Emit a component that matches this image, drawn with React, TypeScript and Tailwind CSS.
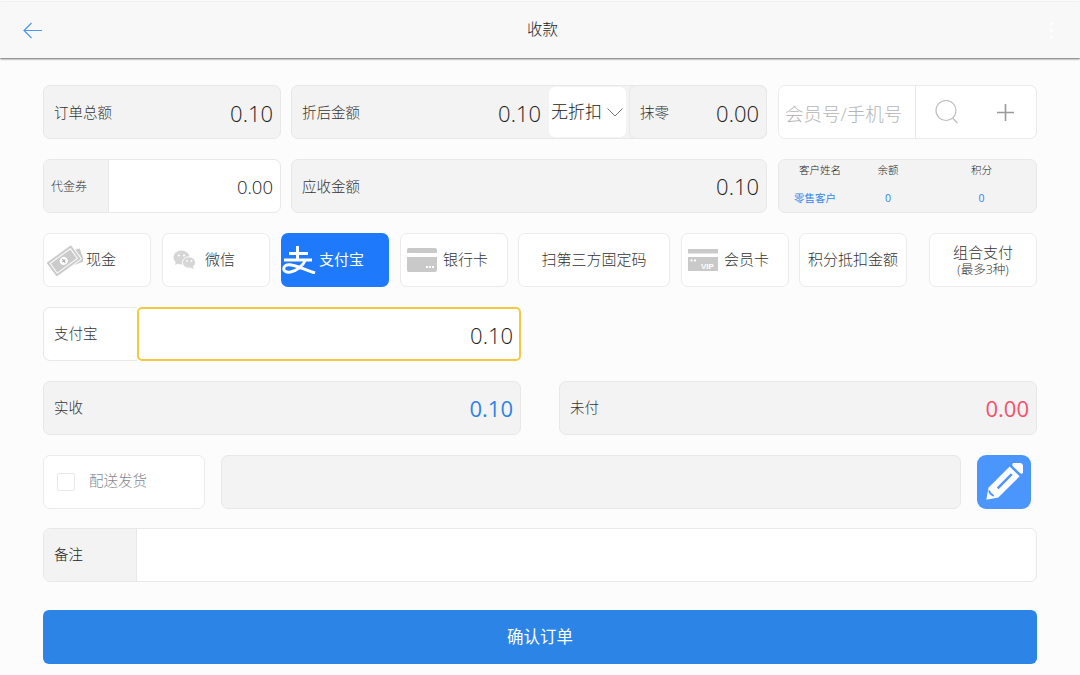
import React from "react";

const font = { fontFamily: '"Open Sans","Noto Sans CJK SC",sans-serif' };

function Stat({ label, value, className = "", valueClass = "text-[#1c1c1c] font-light pt-[3px]", labelClass = "pt-[2px]" }: { label: string; value: string; className?: string; valueClass?: string; labelClass?: string }) {
  return (
    <div className={`h-[54px] flex items-center justify-between pl-[10px] pr-[7px] bg-[#f3f3f3] border border-[#e8e8e8] rounded-[7px] ${className}`}>
      <span className={`text-[14.5px] text-[#333] ${labelClass}`}>{label}</span>
      <span className={`text-[22px] ${valueClass}`}>{value}</span>
    </div>
  );
}

function Money() {
  return (
    <svg width="36" height="32" viewBox="0 0 36 32" className="shrink-0">
      <g transform="rotate(-36 18 16)">
        <rect x="7" y="10" width="29" height="15" rx="1" fill="#c9c9c9" stroke="#fff" strokeWidth="1" transform="rotate(16 20 17)" />
        <rect x="1" y="7" width="31" height="18" rx="1.500" fill="#cbcbcb" stroke="#fff" strokeWidth="1" />
        <rect x="4" y="10" width="25" height="12" fill="none" stroke="#fff" strokeWidth="1" />
        <circle cx="16.500" cy="16" r="4" fill="#fff" />
        <path d="M16.500 13.500v5M14.500 16h4" stroke="#a8a8a8" strokeWidth="1" />
      </g>
    </svg>
  );
}

function Wechat() {
  return (
    <svg width="23" height="20" viewBox="0 0 23 20" className="shrink-0">
      <ellipse cx="8.500" cy="7.500" rx="8" ry="7" fill="#d6d6d6" />
      <path d="M3 11l-1 4 4-2z" fill="#d6d6d6" />
      <ellipse cx="16" cy="12.500" rx="6.500" ry="5.700" fill="#d6d6d6" stroke="#fff" strokeWidth="1" />
      <path d="M19.500 16l1.500 3-4-1.500z" fill="#d6d6d6" />
      <circle cx="6" cy="5.500" r="1.100" fill="#fff" />
      <circle cx="11" cy="5.500" r="1.100" fill="#fff" />
      <circle cx="14" cy="11" r="0.900" fill="#fff" />
      <circle cx="18.500" cy="11" r="0.900" fill="#fff" />
    </svg>
  );
}

function Alipay() {
  return (
    <svg width="34" height="28" viewBox="0 0 34 28" fill="none" stroke="#fff" strokeWidth="3" className="shrink-0">
      <path d="M7 7.500h19" />
      <path d="M15.500 0v13" />
      <path d="M2 14h28" />
      <path d="M23.500 14c-2.500 5.500-8.500 11-15 12c-4.500 .6-6.800-1-6.800-3.300c0-3 3-4.400 6.300-4c7 .8 14 4.800 25 8.300" />
    </svg>
  );
}

function BankCard() {
  return (
    <svg width="30" height="25" viewBox="0 0 30 25" className="shrink-0">
      <path d="M0 3a2 2 0 012-2h26a2 2 0 012 2v3H0z" fill="#c9c9c9" />
      <path d="M0 10h30v13a2 2 0 01-2 2H2a2 2 0 01-2-2z" fill="#c9c9c9" />
      <rect x="19" y="19" width="2" height="2" fill="#fff" />
      <rect x="22" y="19" width="2" height="2" fill="#fff" />
      <rect x="25" y="19" width="2" height="2" fill="#fff" />
    </svg>
  );
}

function VipCard() {
  return (
    <svg width="30" height="22" viewBox="0 0 30 22" className="shrink-0">
      <rect x="0" y="0" width="30" height="4.500" fill="#c9c9c9" />
      <rect x="0" y="8" width="30" height="14" fill="#c9c9c9" />
      <rect x="2.500" y="10.500" width="2" height="2" fill="#fff" />
      <rect x="6" y="10.500" width="2" height="2" fill="#fff" />
      <text x="13" y="20.200" fontSize="8" fontWeight="700" fill="#fff" fontFamily="Liberation Sans, sans-serif">VIP</text>
    </svg>
  );
}

function Pencil() {
  return (
    <svg width="38" height="38" viewBox="0 0 38 38">
      <g transform="rotate(45 19 19)">
        <rect x="12" y="-6.500" width="14" height="8" rx="2.500" fill="#fff" />
        <path d="M12 4h14v30l-7 10-7-10z" fill="#fff" />
        <rect x="17.800" y="8" width="2.400" height="20" fill="#4a96fc" />
        <path d="M14.500 35.500c2 1.500 5 1.500 7 .5" fill="none" stroke="#4a96fc" strokeWidth="1.800" />
      </g>
    </svg>
  );
}

function PayButton({ className = "", children }: { className?: string; children: React.ReactNode }) {
  return (
    <div className={`h-[54px] flex items-center rounded-[7px] border border-[#ebebeb] bg-white text-[15px] text-[#333] ${className}`}>
      {children}
    </div>
  );
}

export default function App() {
  return (
    <div style={font} className="w-[1080px] h-[675px] overflow-hidden bg-[#fcfcfc] font-light">
      <header className="mt-[2px] h-[56px] flex items-center justify-between pl-[23px] pr-[27px] bg-[#f8f8f8] shadow-[0_1px_2px_rgba(0,0,0,0.6)]">
        <svg width="19" height="17" viewBox="0 0 19 17" fill="none" stroke="#4a96f5" strokeWidth="1.200">
          <path d="M19 8.500H1M8.500 1L1 8.500 8.500 16" />
        </svg>
        <span className="text-[15.5px] text-[#222] -ml-[7px] -mt-[1px]">收款</span>
        <div className="flex flex-col gap-[4px]">
          <i className="block w-[3px] h-[3px] rounded-full bg-white" />
          <i className="block w-[3px] h-[3px] rounded-full bg-white" />
          <i className="block w-[3px] h-[3px] rounded-full bg-white" />
        </div>
      </header>

      <main className="pt-[27px] pl-[43px] w-[1037px] flex flex-col">
        <div className="flex">
          <Stat label="订单总额" value="0.10" className="w-[238px]" />
          <div className="ml-[10px] w-[476px] h-[54px] flex items-stretch bg-[#f3f3f3] border border-[#e8e8e8] rounded-[7px]">
            <div className="flex-1 flex items-center justify-between pl-[10px] pr-[8px]">
              <span className="text-[14.5px] text-[#333] pt-[2px]">折后金额</span>
              <span className="text-[22px] text-[#1c1c1c] pt-[3px]">0.10</span>
            </div>
            <div className="w-[77px] flex items-center pl-[2px] bg-white rounded-[6px] my-[1px] text-[17px] text-[#222]">
              <span>无折扣</span>
              <svg width="16" height="9" viewBox="0 0 16 9" fill="none" stroke="#777" strokeWidth="1" className="ml-[5px]">
                <path d="M0.500 0.500L8 8l7.500-7.500" />
              </svg>
            </div>
            <div className="w-[3px]" />
            <div className="w-[138px] -my-[1px] -mr-[1px] flex items-center justify-between pl-[10px] pr-[7px] border border-[#e8e8e8] rounded-[7px]">
              <span className="text-[14.5px] text-[#333] pt-[1px]">抹零</span>
              <span className="text-[22px] text-[#1c1c1c] pt-[3px]">0.00</span>
            </div>
          </div>
          <div className="ml-[11px] w-[259px] h-[54px] flex items-center bg-white border border-[#ebebeb] rounded-[7px]">
            <div className="w-[137px] h-full flex items-center pl-[6px] pt-[3px] border-r border-[#e8e8e8] text-[18.5px] text-[#b5b5b5]">会员号/手机号</div>
            <div className="flex-1 flex items-center pl-[19px]">
              <svg width="25" height="24" viewBox="0 0 25 24" fill="none" stroke="#bdbdbd" strokeWidth="1.200">
                <circle cx="11" cy="10.500" r="10" />
                <path d="M17.500 18l5 5" />
              </svg>
              <svg width="19" height="19" viewBox="0 0 19 19" fill="none" stroke="#9a9a9a" strokeWidth="1.600" className="ml-[36px]">
                <path d="M9.500 1v17M1 9.500h17" />
              </svg>
            </div>
          </div>
        </div>

        <div className="flex mt-[20px]">
          <div className="w-[238px] h-[54px] flex bg-white border border-[#e8e8e8] rounded-[7px] overflow-hidden">
            <div className="w-[65px] flex items-center pl-[7px] pt-[1px] bg-[#f3f3f3] border-r border-[#e8e8e8] text-[12px] text-[#333]">代金券</div>
            <div className="flex-1 flex items-center justify-end pr-[7px] pt-[2px] text-[18.5px] text-[#1c1c1c]">0.00</div>
          </div>
          <Stat label="应收金额" value="0.10" className="ml-[10px] w-[476px]" valueClass="text-[#1c1c1c] pt-[1px]" />
          <div className="ml-[11px] w-[259px] h-[54px] grid grid-cols-[82px_54px_1fr] grid-rows-2 items-center bg-[#f3f3f3] border border-[#e8e8e8] rounded-[7px] text-[10.5px] text-center">
            <span className="text-[#222] pb-[5px]">客户姓名</span>
            <span className="text-[#222] pb-[5px]">余额</span>
            <span className="text-[#222] pb-[5px] pl-[12px]">积分</span>
            <span className="text-[#2f86ea] font-normal pb-[1px] pr-[10px]">零售客户</span>
            <span className="text-[#2f86ea] font-normal pb-[1px]">0</span>
            <span className="text-[#2f86ea] font-normal pb-[1px] pl-[12px]">0</span>
          </div>
        </div>

        <div className="flex mt-[20px]">
          <PayButton className="w-[108px] pl-[3px] pb-[1px]"><Money /><span className="ml-[3px]">现金</span></PayButton>
          <PayButton className="w-[108px] ml-[11px] pl-[10px] pb-[1px]"><Wechat /><span className="ml-[9px]">微信</span></PayButton>
          <div className="w-[108px] ml-[11px] h-[54px] flex items-center pl-[1px] pb-[1px] rounded-[7px] bg-[#1e79fb] text-[15px] text-white font-normal">
            <Alipay /><span className="ml-[3px]">支付宝</span>
          </div>
          <PayButton className="w-[108px] ml-[11px] pl-[6px] pb-[1px]"><BankCard /><span className="ml-[6px]">银行卡</span></PayButton>
          <PayButton className="w-[152px] ml-[10px] justify-center pb-[1px]">扫第三方固定码</PayButton>
          <PayButton className="w-[108px] ml-[11px] pl-[6px] pb-[1px]"><VipCard /><span className="ml-[6px]">会员卡</span></PayButton>
          <PayButton className="w-[108px] ml-[10px] justify-center pb-[1px]">积分抵扣金额</PayButton>
          <PayButton className="w-[108px] ml-[22px] flex-col justify-center">
            <span className="leading-[20px]">组合支付</span>
            <span className="text-[12.5px] leading-[16px]">(最多3种)</span>
          </PayButton>
        </div>

        <div className="flex mt-[20px]">
          <div className="w-[478px] h-[54px] flex bg-white rounded-[7px]">
            <div className="w-[94px] flex items-center pl-[10px] pb-[1px] border border-r-0 border-[#e8e8e8] rounded-l-[7px] text-[14.5px] text-[#333]">支付宝</div>
            <div className="flex-1 flex items-center justify-end pr-[6px] pt-[3px] border-2 border-[#f5c842] rounded-[5px] text-[22px] text-[#1c1c1c]">0.10</div>
          </div>
        </div>

        <div className="flex mt-[20px]">
          <Stat label="实收" value="0.10" className="w-[478px]" valueClass="text-[#2d84e8] font-normal pt-[1px]" labelClass="" />
          <Stat label="未付" value="0.00" className="ml-[38px] w-[478px]" valueClass="text-[#f4516c] font-normal pt-[1px]" labelClass="" />
        </div>

        <div className="flex mt-[20px]">
          <div className="w-[162px] h-[54px] flex items-center pl-[13px] bg-white border border-[#ebebeb] rounded-[7px]">
            <span className="w-[18px] h-[18px] border border-[#e8e8e8] rounded-[2px]" />
            <span className="ml-[14px] pb-[3px] text-[14.5px] text-[#888]">配送发货</span>
          </div>
          <div className="ml-[16px] w-[740px] h-[54px] bg-[#f3f3f3] border border-[#e8e8e8] rounded-[7px]" />
          <div className="ml-[16px] w-[54px] h-[54px] flex items-center justify-center bg-[#4a96fc] rounded-[9px]">
            <Pencil />
          </div>
        </div>

        <div className="flex mt-[19px] h-[54px] bg-white border border-[#e8e8e8] rounded-[7px] overflow-hidden">
          <div className="w-[93px] flex items-center pl-[10px] pb-[2px] pt-[1px] bg-[#f3f3f3] border-r border-[#e8e8e8] text-[14.5px] text-[#222]">备注</div>
        </div>

        <div className="mt-[28px] h-[54px] flex items-center justify-center bg-[#2b84e6] rounded-[6px] text-[16.5px] text-white font-normal">确认订单</div>
      </main>
    </div>
  );
}
